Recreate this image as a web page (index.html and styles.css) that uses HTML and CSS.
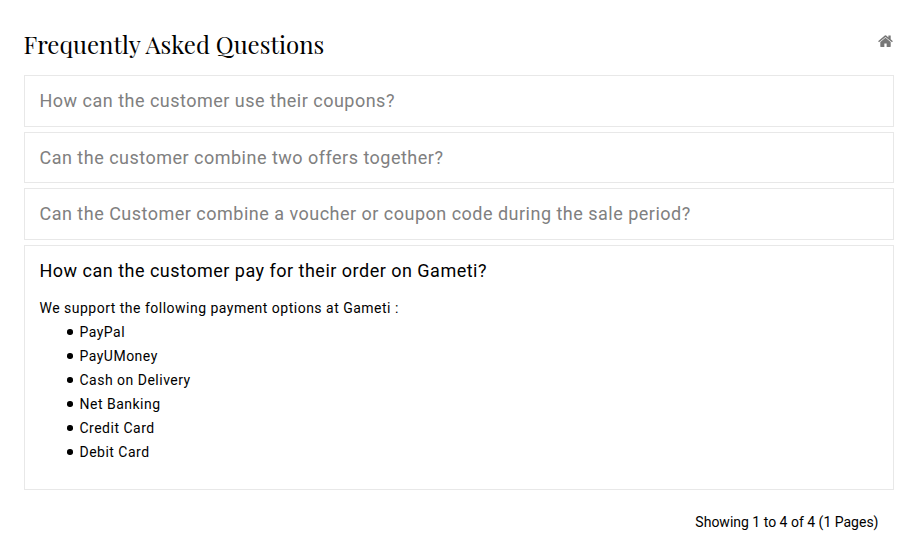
FILE: index.html
```html
<!DOCTYPE html>
<html lang="en">
<head>
<meta charset="utf-8">
<title>Frequently Asked Questions</title>
<link rel="stylesheet" href="styles.css">
</head>
<body>
<main class="faq">
  <header class="faq-header">
    <h1>Frequently Asked Questions</h1>
    <a class="home" href="#" aria-label="Home"><svg viewBox="0 0 1664 1312" width="15" height="12"><path fill="currentColor" d="M1408 768v480q0 26-19 45t-45 19H960V928H704v384H320q-26 0-45-19t-19-45V768l1-6 575-474 575 474q1 2 1 6zm223-69l-62 74q-8 9-21 11h-3q-13 0-21-7L832 200 140 777q-12 8-24 7-13-2-21-11l-62-74q-8-10-7-23.500T37 654L756 55q32-26 76-26t76 26l244 204V64q0-14 9-23t23-9h192q14 0 23 9t9 23v408l219 182q10 8 11 21.500t-7 23.500z"/></svg></a>
  </header>
  <section class="item"><h2>How can the customer use their coupons?</h2></section>
  <section class="item"><h2>Can the customer combine two offers together?</h2></section>
  <section class="item"><h2>Can the Customer combine a voucher or coupon code during the sale period?</h2></section>
  <section class="item open">
    <h2>How can the customer pay for their order on Gameti?</h2>
    <div class="answer">
      <p>We support the following payment options at Gameti :</p>
      <ul>
        <li>PayPal</li>
        <li>PayUMoney</li>
        <li>Cash on Delivery</li>
        <li>Net Banking</li>
        <li>Credit Card</li>
        <li>Debit Card</li>
      </ul>
    </div>
  </section>
  <footer class="results">Showing 1 to 4 of 4 (1 Pages)</footer>
</main>
</body>
</html>
```
FILE: styles.css
```css
* { box-sizing: border-box; }
body { margin: 0; background: #fff; color: #000; font: 14px/24px Roboto, sans-serif; }
.faq { padding: 28px 26px 0 24px; }
.faq-header { display: flex; justify-content: space-between; height: 47px; }
h1 { margin: 0 0 0 -0.500px; font: 400 24px/32px "Playfair Display", "Liberation Serif", serif; white-space: nowrap; }
.home { color: #777; height: 12px; margin: 7px 1px 0 0; line-height: 0; }
.item { height: 51.600px; margin-bottom: 5px; padding: 13px 14.500px; border: 1px solid #e8e8e8; }
h2 { margin: 0; font-size: 18px; line-height: 24px; font-weight: 400; letter-spacing: 0.49px; color: #808080; }
.open { height: 245px; }
.open h2 { color: #000; }
.answer { margin-top: 13px; letter-spacing: 0.49px; }
.answer p, .answer ul { margin: 0; }
.answer ul { padding-left: 27.500px; list-style: none; }
.answer li { display: flex; align-items: center; gap: 7px; }
.answer li::before { content: ""; width: 5.500px; height: 5.500px; border-radius: 50%; background: #000; }
.results { padding: 15px 15.500px 0 0; text-align: right; }
```
